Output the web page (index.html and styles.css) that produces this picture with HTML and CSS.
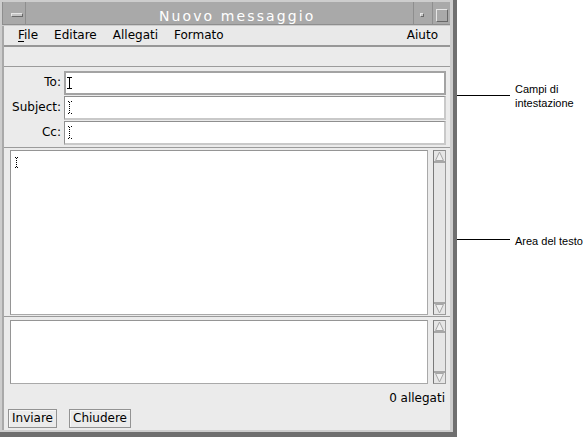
FILE: index.html
```html
<!DOCTYPE html>
<html lang="it">
<head>
<meta charset="utf-8">
<title>Nuovo messaggio</title>
<link rel="stylesheet" href="styles.css">
</head>
<body>
<div class="desk">
  <div class="window">
    <div class="titlebar">
      <div class="tb-menu"><span class="tb-bar"></span></div>
      <div class="title">Nuovo messaggio</div>
      <div class="tb-min"><span class="tb-dot"></span></div>
      <div class="tb-max"><span class="tb-sq"></span></div>
    </div>
    <div class="client">
      <div class="menubar">
        <span class="mi"><u>F</u>ile</span>
        <span class="mi">Editare</span>
        <span class="mi">Allegati</span>
        <span class="mi">Formato</span>
        <span class="mi help">Aiuto</span>
      </div>
      <div class="toolbar"></div>
      <div class="headers">
        <div class="hrow">
          <span class="hlabel">To:</span>
          <div class="field focus">
            <svg class="ibeam" width="5" height="12" viewBox="0 0 5 12"><path d="M0 0.5H5M2.5 0V12M0 11.5H5" stroke="#000" stroke-width="1" fill="none" shape-rendering="crispEdges"/></svg>
          </div>
        </div>
        <div class="hrow">
          <span class="hlabel">Subject:</span>
          <div class="field">
            <svg class="ibeam dotted" width="4" height="13" viewBox="0 0 4 13"><path d="M0 0.5H1M3 0.5H4M1.5 1V12M0 12.5H1M3 12.5H4" stroke="#000" stroke-width="1" stroke-dasharray="1 1" fill="none" shape-rendering="crispEdges"/></svg>
          </div>
        </div>
        <div class="hrow">
          <span class="hlabel">Cc:</span>
          <div class="field">
            <svg class="ibeam dotted" width="4" height="13" viewBox="0 0 4 13"><path d="M0 0.5H1M3 0.5H4M1.5 1V12M0 12.5H1M3 12.5H4" stroke="#000" stroke-width="1" stroke-dasharray="1 1" fill="none" shape-rendering="crispEdges"/></svg>
          </div>
        </div>
      </div>
      <div class="pane body-pane">
        <div class="textbox">
          <svg class="tcursor" width="3" height="11" viewBox="0 0 3 11"><path d="M0 0.5H1M2 0.5H3M1.5 1V10M0 10.5H1M2 10.5H3" stroke="#000" stroke-width="1" stroke-dasharray="1 1" fill="none" shape-rendering="crispEdges"/></svg>
        </div>
        <div class="scrollbar">
          <div class="arrow up"><svg width="11" height="10" viewBox="0 0 11 10"><polygon points="5.5,1 1.5,9.5 9.5,9.5" fill="#efefef" stroke="#a6a6a6" stroke-width="1"/></svg></div>
          <div class="track"></div>
          <div class="arrow down"><svg width="11" height="10" viewBox="0 0 11 10"><polygon points="5.5,9 1.5,0.5 9.5,0.5" fill="#efefef" stroke="#a6a6a6" stroke-width="1"/></svg></div>
        </div>
      </div>
      <div class="pane attach-pane">
        <div class="textbox"></div>
        <div class="scrollbar">
          <div class="arrow up"><svg width="11" height="10" viewBox="0 0 11 10"><polygon points="5.5,1 1.5,9.5 9.5,9.5" fill="#efefef" stroke="#a6a6a6" stroke-width="1"/></svg></div>
          <div class="track"></div>
          <div class="arrow down"><svg width="11" height="10" viewBox="0 0 11 10"><polygon points="5.5,9 1.5,0.5 9.5,0.5" fill="#efefef" stroke="#a6a6a6" stroke-width="1"/></svg></div>
        </div>
      </div>
      <div class="status">0 allegati</div>
      <div class="buttons">
        <span class="btn">Inviare</span>
        <span class="btn">Chiudere</span>
      </div>
    </div>
  </div>
  <div class="notes">
    <div class="note note-headers">
      <span class="leader"></span>
      <span class="ntext">Campi di<br>intestazione</span>
    </div>
    <div class="note note-body">
      <span class="leader"></span>
      <span class="ntext">Area del testo</span>
    </div>
  </div>
</div>
</body>
</html>
```

FILE: styles.css
```css
* { box-sizing: border-box; }
html, body { margin: 0; padding: 0; background: #fff; }
body {
  width: 588px;
  height: 437px;
  overflow: hidden;
  font-family: "DejaVu Sans", sans-serif;
  font-size: 12px;
  color: #000;
}
.desk { display: flex; align-items: flex-start; }

.window {
  flex: none;
  width: 457px;
  height: 437px;
  background: #cdcdcd;
  border-right: 4px solid #6f6f6f;
  border-bottom: 5px solid #6f6f6f;
  padding: 2px 3px 2px 2px;
  display: flex;
  flex-direction: column;
}

/* title bar */
.titlebar {
  flex: none;
  height: 23px;
  display: flex;
  background: #a9a9a9;
  border-left: 1px solid #8e8e8e;
  border-bottom: 1px solid #8e8e8e;
}
.tb-menu {
  width: 23px;
  border-right: 1px solid #8e8e8e;
  display: flex;
  align-items: flex-start;
  padding: 11px 0 0 8px;
}
.tb-bar {
  width: 12px;
  height: 4px;
  background: #c4c4c4;
  border: 1px solid;
  border-color: #e6e6e6 #686868 #686868 #e6e6e6;
}
.title {
  flex: 1;
  color: #fff;
  font-size: 14px;
  letter-spacing: 2.1px;
  line-height: 16px;
  padding: 6px 0 0 133px;
  white-space: nowrap;
}
.tb-min {
  width: 19px;
  border-left: 1px solid #8e8e8e;
  padding: 11px 0 0 6px;
}
.tb-dot {
  display: block;
  width: 4px;
  height: 4px;
  background: #c4c4c4;
  border: 1px solid;
  border-color: #e6e6e6 #686868 #686868 #e6e6e6;
}
.tb-max {
  width: 18px;
  border-left: 1px solid #8e8e8e;
  padding: 7px 0 0 3px;
}
.tb-sq {
  display: block;
  width: 12px;
  height: 13px;
  border: 1px solid;
  border-color: #e6e6e6 #686868 #686868 #e6e6e6;
}

/* client area */
.client {
  flex: 1;
  margin-top: 1px;
  background: #ebebeb;
  border-left: 2px solid #a9a9a9;
  display: flex;
  flex-direction: column;
}
.menubar {
  flex: none;
  height: 21px;
  display: flex;
  gap: 16px;
  padding: 0 12px 0 14px;
  line-height: 19px;
  border-bottom: 2px solid #979797;
  background: #e9e9e9;
}
.mi u { text-decoration: underline; text-underline-offset: 2px; }
.help { margin-left: auto; }

.toolbar {
  flex: none;
  height: 20px;
  border-bottom: 1px solid #9b9b9b;
}

.headers {
  flex: none;
  height: 81px;
  padding: 4px 4px 2px 0;
  display: flex;
  flex-direction: column;
  gap: 1px;
  border-bottom: 1px solid #9b9b9b;
}
.hrow {
  height: 24px;
  display: flex;
  gap: 3px;
}
.hlabel {
  width: 57px;
  text-align: right;
  line-height: 23px;
}
.field {
  flex: 1;
  background: #fff;
  border-style: solid;
  border-width: 1px 2px 2px 1px;
  border-color: #8f8f8f #c9c9c9 #c9c9c9 #8f8f8f;
  display: flex;
  align-items: center;
  padding-left: 2px;
}
.field.focus {
  border-width: 2px;
  border-color: #a3a3a3;
  padding-left: 1px;
}
.ibeam { display: block; }
.ibeam.dotted { margin-left: 1px; }

.pane {
  flex: none;
  display: flex;
  gap: 5px;
  padding: 2px 4px 1px 6px;
}
.body-pane {
  height: 169px;
  border-bottom: 1px solid #9b9b9b;
}
.attach-pane {
  height: 68px;
  padding-top: 3px;
}
.textbox {
  flex: 1;
  background: #fff;
  border: 1px solid;
  border-color: #959595 #a9a9a9 #a9a9a9 #959595;
  padding: 6px 0 0 4px;
}
.tcursor { display: block; }

.scrollbar {
  width: 13px;
  display: flex;
  flex-direction: column;
  background: #e6e6e6;
  border: 1px solid;
  border-color: #8c8c8c #9c9c9c #9c9c9c #7a7a7a;
}
.arrow {
  flex: none;
  height: 12px;
  display: flex;
  justify-content: center;
}
.arrow.up { border-bottom: 2px solid #a7a7a7; }
.arrow.down { border-top: 2px solid #a7a7a7; align-items: flex-end; }
.arrow svg { display: block; }
.track { flex: 1; }

.status {
  flex: none;
  height: 24px;
  padding: 5px 5px 0 0;
  line-height: 17px;
  text-align: right;
}

.buttons {
  flex: none;
  height: 21px;
  display: flex;
  gap: 12px;
  padding-left: 4px;
  align-items: flex-start;
}
.btn {
  height: 19px;
  line-height: 17px;
  padding: 0 3px;
  border: 1px solid #939393;
  box-shadow: inset 1px 1px 0 #f7f7f7;
  background: #ebebeb;
}

/* annotations */
.notes {
  flex: 1;
  padding-top: 82px;
  font-family: "Liberation Sans", Arial, sans-serif;
  font-size: 11px;
  line-height: 14px;
}
.note { display: flex; align-items: flex-start; }
.note-headers { height: 28px; }
.note-headers .leader { margin-top: 13px; }
.note-body { margin-top: 125px; line-height: 13px; }
.note-body .leader { margin-top: 4px; }
.leader {
  flex: none;
  width: 53px;
  height: 1px;
  background: #000;
  margin-right: 5px;
}
.ntext { white-space: nowrap; }
```
